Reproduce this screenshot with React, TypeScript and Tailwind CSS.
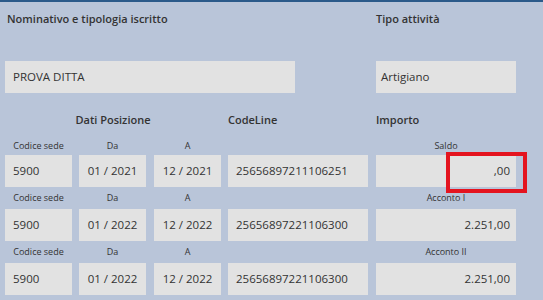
const rows = [
  { sede: "5900", da: "01 / 2021", a: "12 / 2021", code: "25656897211106251", label: "Saldo", importo: ",00", marked: true },
  { sede: "5900", da: "01 / 2022", a: "12 / 2022", code: "25656897221106300", label: "Acconto I", importo: "2.251,00" },
  { sede: "5900", da: "01 / 2022", a: "12 / 2022", code: "25656897221106300", label: "Acconto II", importo: "2.251,00" },
]

const Box = ({ className, children }: { className: string; children?: React.ReactNode }) => (
  <div className={`flex h-[32px] items-center bg-[#e2e2e2] text-[11.5px] text-[#333] ${className}`}>{children}</div>
)

export default function App() {
  return (
    <div
      className="flex h-[300px] w-[543px] flex-col border-t-2 border-[#2b5a8a] bg-[#b9c5d9] pl-[5px] text-[#333]"
      style={{ fontFamily: '"Open Sans", "Liberation Sans", sans-serif' }}
    >
      {/* intestazione */}
      <div className="flex h-[59px] items-start pt-[10px] text-[11px] font-semibold leading-[14px]">
        <div className="w-[290px] pl-[2px]">Nominativo e tipologia iscritto</div>
        <div className="ml-[81px]">Tipo attività</div>
      </div>
      <div className="flex">
        <Box className="w-[290px] pl-[8px]">PROVA DITTA</Box>
        <Box className="ml-[81px] w-[140px] pl-[5px]">Artigiano</Box>
      </div>

      <div className="flex h-[54px] items-center text-[11px] font-semibold">
        <div className="w-[216px] text-center">Dati Posizione</div>
        <div className="ml-[7px] w-[140px]">CodeLine</div>
        <div className="ml-[8px]">Importo</div>
      </div>

      {rows.map((r, i) => (
        <div key={i}>
          <div className={`flex items-center text-[9px] leading-[12px] ${i === 0 ? "-mt-[6px] mb-[4px] h-[10px]" : "h-[22px]"}`}>
            <div className="w-[67px] text-center">Codice sede</div>
            <div className="ml-[7px] w-[67px] text-center">Da</div>
            <div className="ml-[8px] w-[67px] text-center">A</div>
            <div className="ml-[7px] w-[140px]" />
            <div className="ml-[8px] w-[140px] text-center">{r.label}</div>
          </div>
          <div className="flex">
            <Box className="w-[67px] pl-[8px]">{r.sede}</Box>
            <Box className="ml-[7px] w-[67px] justify-center">{r.da}</Box>
            <Box className="ml-[8px] w-[67px] justify-center">{r.a}</Box>
            <Box className="ml-[7px] w-[140px] pl-[8px]">{r.code}</Box>
            <div className="relative ml-[8px]">
              <Box className="w-[140px] justify-end pr-[6px]">{r.importo}</Box>
              {r.marked && (
                <div className="absolute left-[70px] top-[-3px] h-[41px] w-[81px] border-4 border-[#e4141f]" />
              )}
            </div>
          </div>
        </div>
      ))}
    </div>
  )
}
